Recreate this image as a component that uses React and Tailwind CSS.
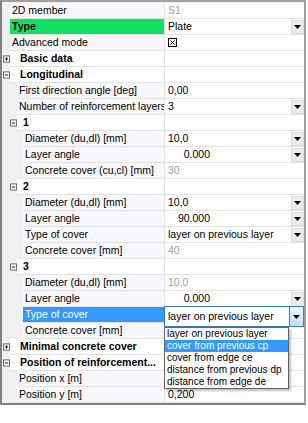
import React from 'react';

/* ── small glyphs ── */
const Arrow = () => (
  <svg width="7" height="4" viewBox="0 0 7 4" aria-hidden="true">
    <path d="M0 0h7L3.5 4z" fill="#000" />
  </svg>
);

const DropButton = () => (
  <span className="ml-auto flex h-[14px] w-[13px] shrink-0 items-center justify-center border border-[#dedede] bg-[#ececec]">
    <Arrow />
  </span>
);

const ExpandBox = ({ open }) => (
  <svg width="8" height="8" viewBox="0 0 8 8" aria-hidden="true">
    <rect x="0.5" y="0.5" width="7" height="7" fill="#fff" stroke="#5a5a5a" />
    <path d="M2 4h4" stroke="#000" />
    {!open && <path d="M4 2v4" stroke="#000" />}
  </svg>
);

const CheckGlyph = () => (
  <svg width="9" height="9" viewBox="0 0 9 9" aria-hidden="true">
    <rect x="0.5" y="0.5" width="8" height="8" fill="#fff" stroke="#000" />
    <path d="M2.5 2.5l4 4M6.5 2.5l-4 4" stroke="#000" />
  </svg>
);

/* ── grid data ── */
const rows = [
  { level: 0, label: '2D member', value: 'S1', muted: true },
  { level: 0, label: 'Type', value: 'Plate', drop: true, green: true },
  { level: 0, label: 'Advanced mode', check: true },
  { cat: true, level: 0, label: 'Basic data' },
  { cat: true, level: 0, label: 'Longitudinal', open: true },
  { level: 1, label: 'First direction angle [deg]', value: '0,00' },
  { level: 1, label: 'Number of reinforcement layers', value: '3', drop: true },
  { cat: true, level: 1, label: '1', open: true },
  { level: 2, label: 'Diameter (du,dl) [mm]', value: '10,0', drop: true },
  { level: 2, label: 'Layer angle', value: '0.000', angle: true, drop: true },
  { level: 2, label: 'Concrete cover (cu,cl) [mm]', value: '30', muted: true },
  { cat: true, level: 1, label: '2', open: true },
  { level: 2, label: 'Diameter (du,dl) [mm]', value: '10,0', drop: true },
  { level: 2, label: 'Layer angle', value: '90.000', angle: true, drop: true },
  { level: 2, label: 'Type of cover', value: 'layer on previous layer', drop: true },
  { level: 2, label: 'Concrete cover [mm]', value: '40', muted: true },
  { cat: true, level: 1, label: '3', open: true },
  { level: 2, label: 'Diameter (du,dl) [mm]', value: '10,0', muted: true },
  { level: 2, label: 'Layer angle', value: '0.000', angle: true, drop: true },
  { level: 2, label: 'Type of cover', selected: true },
  { level: 2, label: 'Concrete cover [mm]' },
  { cat: true, level: 0, label: 'Minimal concrete cover' },
  { cat: true, level: 0, label: 'Position of reinforcement...', open: true },
  { level: 1, label: 'Position x [m]' },
  { level: 1, label: 'Position y [m]', value: '0,200' },
];

const coverOptions = [
  'layer on previous layer',
  'cover from previous cp',
  'cover from edge ce',
  'distance from previous dp',
  'distance from edge de',
];

const GUTTER = ['w-[8px]', 'w-[15px]', 'w-[21px]'];
const BOX_PAD = ['pl-px', 'pl-[8px]', 'pl-[14px]'];
const CAT_PAD = ['pl-[10px]', 'pl-[6px]', 'pl-[6px]'];

/* ── combobox in edit mode, with open list ── */
const OpenCombo = () => (
  <div className="absolute left-[-1px] right-0 top-[-1px] z-10 h-[21px]">
    <div className="flex h-full items-center border border-[#3c7fb1] bg-white pl-[3px]">
      <span className="whitespace-nowrap">layer on previous layer</span>
      <span className="ml-auto flex h-full w-[14px] items-center justify-center border-l border-[#3c7fb1] bg-gradient-to-b from-[#eaf6fd] to-[#bfe0f6]">
        <Arrow />
      </span>
    </div>
    <div className="w-[125px] border border-[#646464] bg-white text-[10px] shadow-[2px_2px_2px_rgba(0,0,0,0.25)]">
      {coverOptions.map((o, i) => (
        <div
          key={o}
          className={`h-[12px] whitespace-nowrap pl-[2px] leading-[12px] ${i === 1 ? 'bg-[#3399ff] text-white' : ''}`}
        >
          {o}
        </div>
      ))}
    </div>
  </div>
);

const Row = ({ cat, level, label, value, muted, drop, green, check, angle, selected, open }) => {
  const labelBg = green ? 'bg-[#12e064] font-bold' : selected ? 'bg-[#3399ff] text-white' : cat ? 'bg-white font-bold' : 'bg-[#f8f8fc]';

  return (
    <div className="flex h-4">
      <div className="flex w-[163px] shrink-0">
        <div className={`flex shrink-0 items-center ${GUTTER[level]} ${cat ? BOX_PAD[level] : ''}`}>
          {cat && <ExpandBox open={open} />}
        </div>
        <div
          className={`flex min-w-0 flex-1 items-center overflow-hidden whitespace-nowrap border-b border-r border-[#e4e4e4] ${cat ? CAT_PAD[level] : 'pl-[2px]'} ${labelBg}`}
        >
          {label}
        </div>
      </div>
      <div className="relative flex min-w-0 flex-1 items-center border-b border-[#e4e4e4] bg-white pl-[3px]">
        {check && <CheckGlyph />}
        {value && (
          <span className={`whitespace-nowrap ${angle ? 'w-[42px] text-right' : ''} ${muted ? 'text-[#a0a0a0]' : ''}`}>
            {value}
          </span>
        )}
        {drop && <DropButton />}
        {selected && <OpenCombo />}
      </div>
    </div>
  );
};

export default function App() {
  return (
    <div className="h-[423px] w-[308px] bg-white font-['Liberation_Sans',Arial,sans-serif] text-[10.5px] text-black">
      <div className="h-[405px] w-[306px] border-2 border-[#a0a0a0] border-l-[#808080] border-b-[#808080] bg-[#f0f0f0] pt-px">
        {rows.map((r, i) => (
          <Row key={i} {...r} />
        ))}
      </div>
    </div>
  );
}
